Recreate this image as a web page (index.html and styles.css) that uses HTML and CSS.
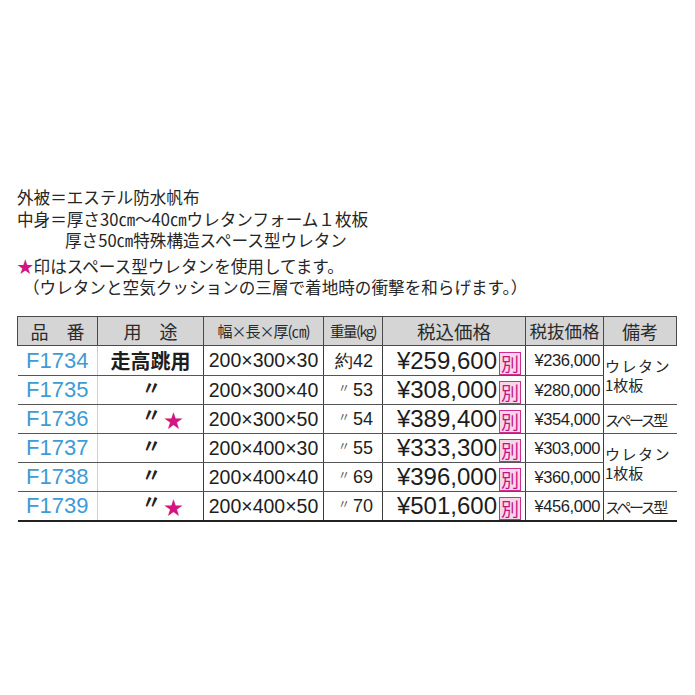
FILE: index.html
```html
<!DOCTYPE html>
<html lang="ja">
<head>
<meta charset="utf-8">
<title>走高跳用マット</title>
<link rel="stylesheet" href="styles.css">
</head>
<body>
<div class="page">
  <div class="notes">
    <p>外被＝エステル防水帆布</p>
    <p>中身＝厚さ30㎝～40㎝ウレタンフォーム１枚板</p>
    <p class="indent">厚さ50㎝特殊構造スペース型ウレタン</p>
    <p class="gap"><span class="star">★</span>印はスペース型ウレタンを使用してます。</p>
    <p class="paren">（ウレタンと空気クッションの三層で着地時の衝撃を和らげます。）</p>
  </div>
  <table class="spec">
    <colgroup>
      <col class="c1"><col class="c2"><col class="c3"><col class="c4"><col class="c5"><col class="c6"><col class="c7">
    </colgroup>
    <thead>
      <tr>
        <th>品　番</th>
        <th>用　途</th>
        <th class="size-h">幅×長×厚(㎝)</th>
        <th class="wt-h">重量(kg)</th>
        <th class="tax-h">税込価格</th>
        <th class="ex-h">税抜価格</th>
        <th class="note-h">備考</th>
      </tr>
    </thead>
    <tbody>
      <tr>
        <td class="code">F1734</td>
        <td class="use"><span class="bold">走高跳用</span></td>
        <td class="size">200×300×30</td>
        <td class="wt">約42</td>
        <td class="price">¥259,600<span class="betsu">別</span></td>
        <td class="ex">¥236,000</td>
        <td class="note" rowspan="2"><span class="ure">ウレタン</span><br><span class="mai">1枚板</span></td>
      </tr>
      <tr>
        <td class="code">F1735</td>
        <td class="use ditto"><span class="do">〃</span></td>
        <td class="size">200×300×40</td>
        <td class="wt"><span class="sdo">〃</span>53</td>
        <td class="price">¥308,000<span class="betsu">別</span></td>
        <td class="ex">¥280,000</td>
      </tr>
      <tr>
        <td class="code">F1736</td>
        <td class="use ditto"><span class="do">〃</span><span class="star">★</span></td>
        <td class="size">200×300×50</td>
        <td class="wt"><span class="sdo">〃</span>54</td>
        <td class="price">¥389,400<span class="betsu">別</span></td>
        <td class="ex">¥354,000</td>
        <td class="note"><span class="space">スペース型</span></td>
      </tr>
      <tr>
        <td class="code">F1737</td>
        <td class="use ditto"><span class="do">〃</span></td>
        <td class="size">200×400×30</td>
        <td class="wt"><span class="sdo">〃</span>55</td>
        <td class="price">¥333,300<span class="betsu">別</span></td>
        <td class="ex">¥303,000</td>
        <td class="note" rowspan="2"><span class="ure">ウレタン</span><br><span class="mai">1枚板</span></td>
      </tr>
      <tr>
        <td class="code">F1738</td>
        <td class="use ditto"><span class="do">〃</span></td>
        <td class="size">200×400×40</td>
        <td class="wt"><span class="sdo">〃</span>69</td>
        <td class="price">¥396,000<span class="betsu">別</span></td>
        <td class="ex">¥360,000</td>
      </tr>
      <tr class="last">
        <td class="code">F1739</td>
        <td class="use ditto"><span class="do">〃</span><span class="star">★</span></td>
        <td class="size">200×400×50</td>
        <td class="wt"><span class="sdo">〃</span>70</td>
        <td class="price">¥501,600<span class="betsu">別</span></td>
        <td class="ex">¥456,000</td>
        <td class="note"><span class="space">スペース型</span></td>
      </tr>
    </tbody>
  </table>
</div>
</body>
</html>
```

FILE: styles.css
```css
html, body {
  margin: 0;
  padding: 0;
  background: #ffffff;
}

.page {
  padding: 187px 0 0 17px;
  font-family: "Noto Sans CJK JP", "Noto Sans", sans-serif;
  color: #262626;
}

.notes p {
  margin: 0;
  font-size: 16.6px;
  line-height: 21.5px;
  height: 21.5px;
  white-space: nowrap;
}

.notes .indent {
  padding-left: 48px;
}

.notes .gap {
  margin-top: 4px;
}

.notes .paren {
  padding-left: 6px;
}

.star {
  color: #d3167f;
}

.spec {
  margin-top: 17.5px;
  border-collapse: collapse;
  table-layout: fixed;
  width: 659px;
}

.c1 { width: 80px; }
.c2 { width: 106px; }
.c3 { width: 120px; }
.c4 { width: 59px; }
.c5 { width: 143px; }
.c6 { width: 78px; }
.c7 { width: 73px; }

.spec th {
  height: 28px;
  padding: 0;
  background: #d5d5d5;
  border: 1px solid #4a4a4a;
  font-weight: normal;
  font-size: 18px;
  line-height: 20px;
  color: #2a2a2a;
  text-align: center;
  white-space: nowrap;
}

.spec th.size-h {
  font-size: 15px;
  letter-spacing: -1px;
}

.spec th.wt-h {
  font-size: 14.5px;
  letter-spacing: -1.5px;
}

.spec th.tax-h {
  font-size: 18.5px;
}

.spec th.ex-h {
  font-size: 17.5px;
}

.spec td {
  height: 27.5px;
  padding: 0;
  border-bottom: 1px solid #555555;
  border-left: 1px solid #3c3c3c;
  white-space: nowrap;
  vertical-align: middle;
}

.spec td.code {
  border-left: none;
  text-align: center;
  font-family: "Liberation Sans", Arial, sans-serif;
  font-size: 22px;
  color: #3d9bd6;
}

.spec td.use {
  border-left: 1px solid #cfcfcf;
  text-align: center;
}

.spec td.use .bold {
  font-weight: bold;
  font-size: 20px;
  color: #1e1e1e;
}

.spec td.ditto {
  text-align: left;
  padding-left: 44px;
}

.do {
  display: inline-block;
  font-weight: bold;
  font-size: 19px;
  line-height: 14px;
  height: 14px;
  color: #222222;
  vertical-align: 2px;
}

.spec td.ditto .star {
  font-size: 19px;
  margin-left: 3px;
  vertical-align: middle;
}

.spec td.size {
  text-align: center;
  font-family: "Liberation Sans", Arial, sans-serif;
  font-size: 19.5px;
  color: #1e1e1e;
}

.spec td.wt {
  text-align: right;
  padding-right: 9px;
  font-family: "Liberation Sans", Arial, sans-serif;
  font-size: 18px;
  color: #1e1e1e;
}

.sdo {
  display: inline-block;
  font-family: "Noto Sans CJK JP", sans-serif;
  font-size: 12px;
  line-height: 10px;
  color: #555555;
  margin-right: 3px;
  vertical-align: 3px;
}

.spec td.price {
  text-align: right;
  padding-right: 4px;
  font-family: "Liberation Sans", Arial, sans-serif;
  font-size: 24px;
  color: #1c1c1c;
}

.betsu {
  display: inline-block;
  margin-left: 2px;
  width: 20px;
  height: 21px;
  line-height: 20px;
  border: 1px solid #cf2d92;
  background: #f8d6ea;
  color: #c4137f;
  font-family: "Noto Sans CJK JP", sans-serif;
  font-size: 18px;
  text-align: center;
  vertical-align: -2px;
}

.spec td.ex {
  text-align: right;
  padding-right: 3px;
  font-family: "Liberation Sans", Arial, sans-serif;
  font-size: 16.5px;
  letter-spacing: -0.4px;
  color: #1e1e1e;
}

.spec td.note {
  text-align: left;
  padding-left: 1px;
  font-size: 15px;
  line-height: 19px;
  color: #262626;
}

.ure {
  letter-spacing: 1.5px;
}

.space {
  letter-spacing: -2.5px;
}

.spec tr.last td {
  border-bottom: 2px solid #222222;
}
```
